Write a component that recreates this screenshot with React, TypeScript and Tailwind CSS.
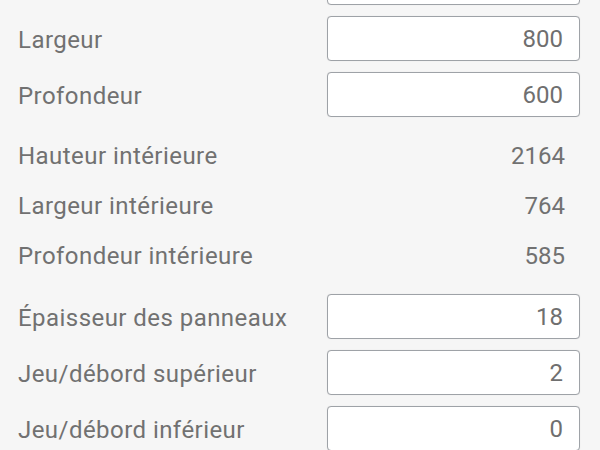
const fields = {
  top: [
    { label: '', value: '' },
    { label: 'Largeur', value: '800' },
    { label: 'Profondeur', value: '600' },
  ],
  inner: [
    { label: 'Hauteur intérieure', value: '2164' },
    { label: 'Largeur intérieure', value: '764' },
    { label: 'Profondeur intérieure', value: '585' },
  ],
  bottom: [
    { label: 'Épaisseur des panneaux', value: '18' },
    { label: 'Jeu/débord supérieur', value: '2' },
    { label: 'Jeu/débord inférieur', value: '0' },
  ],
};

function InputRow({ label, value }: { label: string; value: string }) {
  return (
    <div className="flex h-[45px] items-center justify-between pl-[18px] pr-[20px]">
      <span className="mt-[3px] whitespace-nowrap tracking-[0.45px]">{label}</span>
      <input
        readOnly
        value={value}
        className="h-[45px] w-[253px] rounded-[4px] border-[1.5px] border-[#9ea2a7] bg-white pr-[16px] text-right text-[#6f6f6f] shadow-[0_0_1px_rgba(0,0,0,0.15)] outline-none"
      />
    </div>
  );
}

function InfoRow({ label, value }: { label: string; value: string }) {
  return (
    <div className="flex h-[50px] items-center justify-between pl-[18px] pr-[35px]">
      <span className="whitespace-nowrap tracking-[0.45px]">{label}</span>
      <span>{value}</span>
    </div>
  );
}

export default function App() {
  return (
    <div
      className="h-[450px] w-[600px] overflow-hidden bg-[#f6f6f6] text-[24px] leading-[36px] text-[#717171]"
      style={{ fontFamily: 'Roboto, "Noto Sans", sans-serif' }}
    >
      <div className="-mt-[40px] flex flex-col gap-[11px]">
        {fields.top.map((f, i) => (
          <InputRow key={i} {...f} />
        ))}
      </div>

      <div className="mt-[14px] flex flex-col">
        {fields.inner.map((f) => (
          <InfoRow key={f.label} {...f} />
        ))}
      </div>

      <div className="mt-[13px] flex flex-col gap-[11px]">
        {fields.bottom.map((f) => (
          <InputRow key={f.label} {...f} />
        ))}
      </div>
    </div>
  );
}
